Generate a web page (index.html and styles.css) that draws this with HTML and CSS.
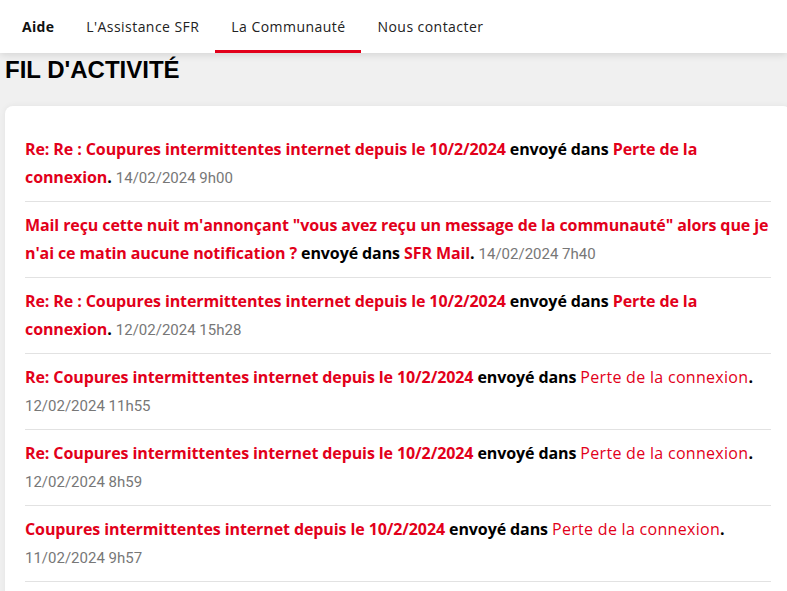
FILE: index.html
```html
<!DOCTYPE html>
<html lang="fr">
<head>
    <meta charset="UTF-8">
    <meta name="viewport" content="width=device-width, initial-scale=1.0">
    <title>Fil d'activité</title>
    <link rel="stylesheet" href="styles.css">
</head>
<body>
    <nav class="topnav">
        <a class="nav-item nav-home" href="#">Aide</a>
        <a class="nav-item" href="#">L'Assistance SFR</a>
        <a class="nav-item active" href="#">La Communauté</a>
        <a class="nav-item" href="#">Nous contacter</a>
    </nav>

    <main class="page">
        <h1 class="page-title">FIL D'ACTIVITÉ</h1>

        <div class="card">
            <ul class="feed">
                <li class="feed-item">
                    <a href="#" class="link">Re: Re : Coupures intermittentes internet depuis le 10/2/2024</a>
                    <span class="sent">envoyé dans</span>
                    <a href="#" class="link board">Perte de la connexion</a><span class="sent">.</span>
                    <span class="date">14/02/2024 9h00</span>
                </li>
                <li class="feed-item">
                    <a href="#" class="link">Mail reçu cette nuit m'annonçant "vous avez reçu un message de la communauté" alors que je n'ai ce matin aucune notification ?</a>
                    <span class="sent">envoyé dans</span>
                    <a href="#" class="link board">SFR Mail</a><span class="sent">.</span>
                    <span class="date">14/02/2024 7h40</span>
                </li>
                <li class="feed-item">
                    <a href="#" class="link">Re: Re : Coupures intermittentes internet depuis le 10/2/2024</a>
                    <span class="sent">envoyé dans</span>
                    <a href="#" class="link board">Perte de la connexion</a><span class="sent">.</span>
                    <span class="date">12/02/2024 15h28</span>
                </li>
                <li class="feed-item read">
                    <a href="#" class="link">Re: Coupures intermittentes internet depuis le 10/2/2024</a>
                    <span class="sent">envoyé dans</span>
                    <a href="#" class="link board">Perte de la connexion</a><span class="sent">.</span>
                    <span class="date">12/02/2024 11h55</span>
                </li>
                <li class="feed-item read">
                    <a href="#" class="link">Re: Coupures intermittentes internet depuis le 10/2/2024</a>
                    <span class="sent">envoyé dans</span>
                    <a href="#" class="link board">Perte de la connexion</a><span class="sent">.</span>
                    <span class="date">12/02/2024 8h59</span>
                </li>
                <li class="feed-item read">
                    <a href="#" class="link">Coupures intermittentes internet depuis le 10/2/2024</a>
                    <span class="sent">envoyé dans</span>
                    <a href="#" class="link board">Perte de la connexion</a><span class="sent">.</span>
                    <span class="date">11/02/2024 9h57</span>
                </li>
            </ul>
        </div>
    </main>
</body>
</html>
```

FILE: styles.css
```css
body {
    margin: 0;
    padding: 0;
    background-color: #f0f0f0;
    font-family: "Open Sans", "Liberation Sans", sans-serif;
    overflow: hidden;
    height: 100vh;
}

.topnav {
    position: relative;
    z-index: 1;
    display: flex;
    height: 53px;
    padding-left: 6px;
    background-color: #fff;
    box-shadow: 0 1px 8px rgba(0, 0, 0, 0.14);
}

.nav-item {
    display: flex;
    align-items: center;
    padding: 3px 16px 0;
    font-family: "Open Sans", sans-serif;
    font-size: 14px;
    letter-spacing: 0.45px;
    color: #222;
    text-decoration: none;
    border-bottom: 3px solid transparent;
}

.nav-home {
    font-weight: 700;
    letter-spacing: 0.3px;
    color: #111;
}

.nav-item.active {
    border-bottom-color: #e2001a;
}

.page {
    padding-left: 5px;
}

.page-title {
    margin: 3px 0 22px;
    font-family: "Liberation Sans", Arial, sans-serif;
    font-size: 24px;
    line-height: 28px;
    font-weight: 700;
    color: #000;
}

.card {
    width: 786px;
    box-sizing: border-box;
    padding: 20px 20px 19px;
    background-color: #fff;
    border-radius: 8px;
    box-shadow: 0 0 6px rgba(0, 0, 0, 0.06);
}

.feed {
    list-style: none;
    margin: 0;
    padding: 0;
}

.feed-item {
    padding: 9px 0 10px;
    border-bottom: 1px solid #e2e2e2;
    font-size: 16px;
    line-height: 28px;
    font-weight: 700;
    letter-spacing: -0.1px;
}

.link {
    color: #e2001a;
    text-decoration: none;
}

.read .board {
    font-weight: 500;
    letter-spacing: 0.3px;
}

.sent {
    color: #000;
}

.date {
    font-family: Roboto, sans-serif;
    font-size: 15px;
    line-height: 1;
    font-weight: 400;
    letter-spacing: 0;
    color: #777;
}
```
